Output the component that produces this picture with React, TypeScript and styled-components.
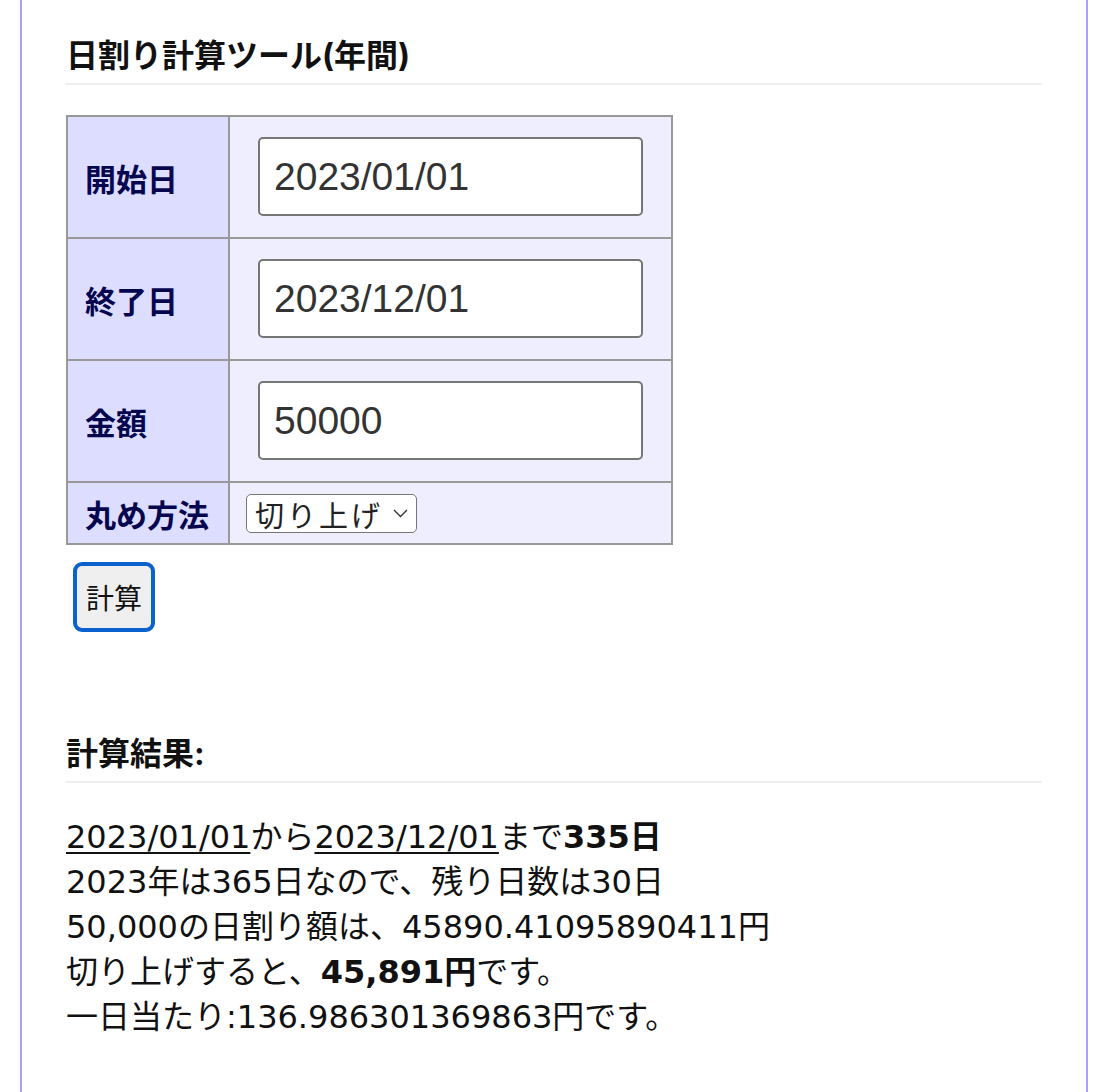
import styled, { createGlobalStyle } from "styled-components";

const GlobalStyle = createGlobalStyle`
  body {
    margin: 0;
    background: #fff;
    font-family: "Inter", "Noto Sans CJK JP", sans-serif;
    color: #111;
  }
`;

const Page = styled.div`
  box-sizing: border-box;
  min-height: 100vh;
  margin: 0 10px 0 20px;
  padding: 33px 44px 40px;
  border-left: 2px solid #a3a3ff;
  border-right: 2px solid #a3a3ff;
`;

const Heading = styled.h3`
  margin: 0;
  padding-bottom: 5px;
  border-bottom: 2px solid #eee;
  font-size: 32px;
  line-height: 45px;
  font-weight: 700;
  color: #111;
`;

const ResultHeading = styled(Heading)`
  margin-top: 99px;
`;

const Form = styled.table`
  margin-top: 30px;
  border-collapse: collapse;
  border: 2px solid #999;
`;

const Label = styled.th`
  box-sizing: border-box;
  width: 162px;
  padding: 0 0 0 17px;
  border: 2px solid #999;
  background: #ddf;
  color: #06064f;
  font-family: "Noto Sans CJK JP", sans-serif;
  font-size: 31px;
  font-weight: 700;
  text-align: left;
  white-space: nowrap;
`;

const Cell = styled.td<{ $compact?: boolean }>`
  box-sizing: border-box;
  width: 443px;
  padding: ${(p) => (p.$compact ? "11px 16px 10px" : "20px 16px 21px")};
  border: 2px solid #999;
  background: #eef;
`;

const TextInput = styled.input`
  display: block;
  box-sizing: border-box;
  width: 385px;
  height: 79px;
  margin: 0 12px;
  padding: 0 14px;
  border: 2px solid #767676;
  border-radius: 5px;
  background: #fff;
  color: #333;
  font-family: "Liberation Sans", sans-serif;
  font-size: 39px;
  outline: none;
`;

const SelectWrap = styled.div`
  position: relative;
  display: inline-block;
`;

const Select = styled.select`
  appearance: none;
  box-sizing: border-box;
  width: 171px;
  height: 39px;
  padding: 0 30px 0 8px;
  border: 1.5px solid #767676;
  border-radius: 5px;
  background: #fff;
  color: #222;
  font-family: "Noto Sans CJK JP", sans-serif;
  font-size: 29px;
  letter-spacing: 3px;
  line-height: 36px;
`;

const Chevron = styled.svg`
  position: absolute;
  right: 9px;
  top: 15px;
  pointer-events: none;
`;

const CalcButton = styled.button`
  display: block;
  box-sizing: border-box;
  width: 82px;
  height: 70px;
  margin: 17px 0 0 7px;
  padding: 0;
  border: 4px solid #0b62cf;
  border-radius: 9px;
  background: #efefef;
  color: #111;
  font-family: "Noto Sans CJK JP", sans-serif;
  font-size: 28px;
`;

const Result = styled.div`
  margin-top: 32px;
  font-family: "DejaVu Sans", "Noto Sans CJK JP", sans-serif;
  font-size: 32px;
  line-height: 45px;
  color: #111;
`;

const DateText = styled.span`
  text-decoration: underline;
  text-decoration-thickness: 2px;
  text-underline-offset: 4px;
`;

const rows = [
  { label: "開始日", value: "2023/01/01" },
  { label: "終了日", value: "2023/12/01" },
  { label: "金額", value: "50000" },
];

export default function App() {
  return (
    <>
      <GlobalStyle />
      <Page>
        <Heading>日割り計算ツール(年間)</Heading>
        <Form>
          <tbody>
            {rows.map((r) => (
              <tr key={r.label}>
                <Label>{r.label}</Label>
                <Cell>
                  <TextInput defaultValue={r.value} />
                </Cell>
              </tr>
            ))}
            <tr>
              <Label>丸め方法</Label>
              <Cell $compact>
                <SelectWrap>
                  <Select defaultValue="ceil">
                    <option value="ceil">切り上げ</option>
                    <option value="floor">切り捨て</option>
                    <option value="round">四捨五入</option>
                  </Select>
                  <Chevron width="15" height="9" viewBox="0 0 15 9">
                    <path d="M1 1l6.5 6.5L14 1" fill="none" stroke="#333" strokeWidth="1.4" />
                  </Chevron>
                </SelectWrap>
              </Cell>
            </tr>
          </tbody>
        </Form>
        <CalcButton>計算</CalcButton>

        <ResultHeading>計算結果:</ResultHeading>
        <Result>
          <div>
            <DateText>2023/01/01</DateText>から<DateText>2023/12/01</DateText>まで<b>335日</b>
          </div>
          <div>2023年は365日なので、残り日数は30日</div>
          <div>50,000の日割り額は、45890.41095890411円</div>
          <div>
            切り上げすると、<b>45,891円</b>です。
          </div>
          <div>一日当たり:136.986301369863円です。</div>
        </Result>
      </Page>
    </>
  );
}
